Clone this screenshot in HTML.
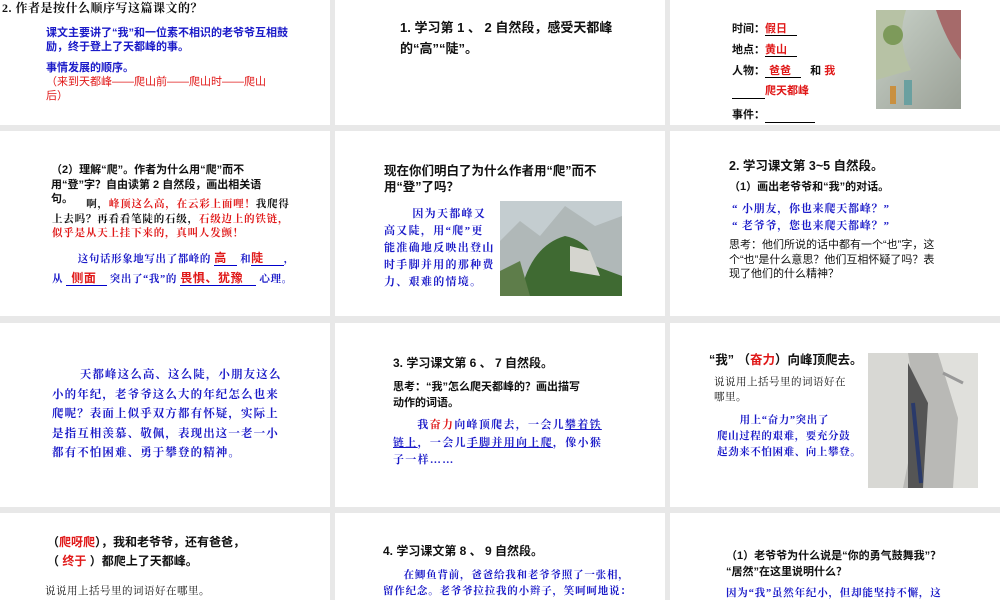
<!DOCTYPE html><html><head><meta charset="utf-8"><style>
body{margin:0;width:1000px;height:600px;background:#e8e8e8;position:relative;overflow:hidden;font-family:"Liberation Sans","Noto Sans CJK SC",sans-serif;font-size:11px;color:#111}
.s{position:absolute;background:#fff;overflow:hidden}
.a{position:absolute;white-space:nowrap;line-height:1.3}
.b{color:#1a1ac8;font-weight:bold}.r{color:#e01818}.bl{color:#1a1ac8}
.k{font-family:"Liberation Serif","Noto Serif CJK SC",serif}
u{text-decoration:underline}
.img{position:absolute}
</style></head><body>
<div class="s" style="left:0;top:0;width:330px;height:125px">
<div class="a k" style="left:2px;top:1px;font-weight:bold;font-size:12px;letter-spacing:0.5px">2. 作者是按什么顺序写这篇课文的？</div>
<div class="a b" style="left:46px;top:26px;line-height:14px;font-size:11px">课文主要讲了“我”和一位素不相识的老爷爷互相鼓<br>励，终于登上了天都峰的事。</div>
<div class="a b" style="left:46px;top:61px">事情发展的顺序。</div>
<div class="a r" style="left:46px;top:75px;line-height:14px">（来到天都峰——爬山前——爬山时——爬山<br>后）</div>
</div>
<div class="s" style="left:335px;top:0;width:330px;height:125px">
<div class="a" style="left:65px;top:17px;font-weight:bold;font-size:13px;line-height:21px">1. 学习第 1 、 2 自然段，感受天都峰<br>的“高”“陡”。</div>
</div>
<div class="s" style="left:670px;top:0;width:330px;height:125px">
<div class="a" style="left:62px;top:22px;font-size:11px;font-weight:bold">时间：<span class="r" style="border-bottom:1px solid #000;padding-right:10px">假日</span></div>
<div class="a" style="left:62px;top:43px;font-weight:bold">地点：<span class="r" style="border-bottom:1px solid #000;padding-right:10px">黄山</span></div>
<div class="a" style="left:62px;top:64px;font-weight:bold">人物：<span class="r" style="border-bottom:1px solid #000;padding:0 10px 0 4px">爸爸</span>&nbsp;&nbsp; 和 <span class="r">我</span></div>
<div class="a" style="left:62px;top:84px;font-weight:bold"><span style="border-bottom:1px solid #000;display:inline-block;width:33px">&nbsp;</span><span class="r">爬天都峰</span></div>
<div class="a" style="left:62px;top:108px;font-weight:bold">事件：<span style="border-bottom:1px solid #000;display:inline-block;width:50px">&nbsp;</span></div>
<svg class="img" style="left:206px;top:10px" width="85" height="99"><defs><linearGradient id="g1" x1="0" y1="0" x2="1" y2="1"><stop offset="0" stop-color="#c9d2c9"/><stop offset="1" stop-color="#9aa096"/></linearGradient></defs><rect width="85" height="99" fill="url(#g1)"/><path d="M0 0h30q-10 30 5 60l-35 10z" fill="#b7c2a5"/><path d="M60 0h25v50q-15-20-25-50z" fill="#a66a6a"/><circle cx="17" cy="25" r="10" fill="#7d9a5a"/><rect x="28" y="70" width="8" height="25" fill="#6aa0a0"/><rect x="14" y="76" width="6" height="18" fill="#c99040"/></svg>
</div>

<div class="s" style="left:0;top:131px;width:330px;height:185px">
<div class="a" style="left:51px;top:32px;font-weight:bold;line-height:14.5px">（2）理解“爬”。作者为什么用“爬”而不<br>用“登”字？自由读第 2 自然段，画出相关语<br>句。</div>
<div class="a k" style="left:52px;top:67px;font-weight:bold;line-height:14.5px;font-size:10.5px;letter-spacing:0.8px">&nbsp;&nbsp;&nbsp;&nbsp;&nbsp;&nbsp;&nbsp;&nbsp;&nbsp;&nbsp;啊，<span class="r">峰顶这么高，在云彩上面哩！</span>我爬得<br>上去吗？再看看笔陡的石级，<span class="r">石级边上的铁链，</span><br><span class="r">似乎是从天上挂下来的，真叫人发颤！</span></div>
<div class="a k b" style="left:52px;top:118px;line-height:19px;font-size:10.5px;letter-spacing:0.6px">&nbsp;&nbsp;&nbsp;&nbsp;&nbsp;&nbsp;&nbsp;&nbsp;这句话形象地写出了都峰的 <span class="r" style="border-bottom:1px solid #00c;padding-right:10px;font-family:'Liberation Sans','Noto Sans CJK SC';font-size:12px">高</span> 和<span class="r" style="border-bottom:1px solid #00c;padding-right:20px;font-family:'Liberation Sans','Noto Sans CJK SC';font-size:12px">陡</span>，<br>从 <span class="r" style="border-bottom:1px solid #00c;padding:0 10px 0 5px;font-family:'Liberation Sans','Noto Sans CJK SC';font-size:12px">侧面</span> 突出了“我”的 <span class="r" style="border-bottom:1px solid #00c;padding-right:13px;font-family:'Liberation Sans','Noto Sans CJK SC';font-size:12px">畏惧、犹豫</span> 心理。</div>
</div>
<div class="s" style="left:335px;top:131px;width:330px;height:185px">
<div class="a" style="left:49px;top:32px;font-weight:bold;font-size:12.5px;line-height:16px">现在你们明白了为什么作者用“爬”而不<br>用“登”了吗？</div>
<div class="a k b" style="left:49px;top:75px;line-height:17px;font-size:11px;letter-spacing:1.3px">&nbsp;&nbsp;&nbsp;&nbsp;&nbsp;&nbsp;&nbsp;因为天都峰又<br>高又陡，用“爬”更<br>能准确地反映出登山<br>时手脚并用的那种费<br>力、艰难的情境。</div>
<svg class="img" style="left:165px;top:70px" width="122" height="95"><rect width="122" height="95" fill="#c4cdd0"/><path d="M0 40l20-20 20 15 25-30 30 20 27-10v80H0z" fill="#b0b8b8"/><path d="M20 95q10-50 45-60 25 5 30 30l27 10v20z" fill="#3f6a32"/><path d="M0 70l20-10 10 35H0z" fill="#5e7d4a"/><path d="M70 45l20 5 10 25-30-5z" fill="#d5d5cf"/></svg>
</div>
<div class="s" style="left:670px;top:131px;width:330px;height:185px">
<div class="a" style="left:59px;top:27px;font-weight:bold;font-size:12.5px">2. 学习课文第 3~5 自然段。</div>
<div class="a" style="left:59px;top:49px;font-weight:bold">（1）画出老爷爷和“我”的对话。</div>
<div class="a k b" style="left:62px;top:70px;line-height:17px;letter-spacing:0.8px">“ 小朋友，你也来爬天都峰？”<br>“ 老爷爷，您也来爬天都峰？”</div>
<div class="a" style="left:59px;top:107px;line-height:14.5px">思考：他们所说的话中都有一个“也”字，这<br>个“也”是什么意思？他们互相怀疑了吗？表<br>现了他们的什么精神？</div>
</div>

<div class="s" style="left:0;top:323px;width:330px;height:184px">
<div class="a k b" style="left:52px;top:43px;line-height:19.5px;font-size:11.5px;letter-spacing:1.1px">&nbsp;&nbsp;&nbsp;&nbsp;&nbsp;&nbsp;&nbsp;天都峰这么高、这么陡，小朋友这么<br>小的年纪，老爷爷这么大的年纪怎么也来<br>爬呢？表面上似乎双方都有怀疑，实际上<br>是指互相羡慕、敬佩，表现出这一老一小<br>都有不怕困难、勇于攀登的精神。</div>
</div>
<div class="s" style="left:335px;top:323px;width:330px;height:184px">
<div class="a" style="left:58px;top:33px;font-weight:bold;font-size:12px">3. 学习课文第 6 、 7 自然段。</div>
<div class="a" style="left:58px;top:56px;font-weight:bold;line-height:16px">思考：“我”怎么爬天都峰的？画出描写<br>动作的词语。</div>
<div class="a k b" style="left:58px;top:94px;line-height:17.5px;letter-spacing:1.3px">&nbsp;&nbsp;&nbsp;&nbsp;&nbsp;&nbsp;我<span class="r">奋力</span>向峰顶爬去，一会儿<u>攀着铁</u><br><u>链上</u>，一会儿<u>手脚并用向上爬</u>，像小猴<br>子一样……</div>
</div>
<div class="s" style="left:670px;top:323px;width:330px;height:184px">
<div class="a" style="left:39px;top:29px;font-weight:bold;font-size:12.5px">“我” （<span class="r">奋力</span>）向峰顶爬去。</div>
<div class="a k" style="left:44px;top:53px;line-height:14.5px;font-size:10.5px;letter-spacing:0.5px">说说用上括号里的词语好在<br>哪里。</div>
<div class="a k b" style="left:47px;top:90px;line-height:16px;font-size:10.5px;letter-spacing:0.6px">&nbsp;&nbsp;&nbsp;&nbsp;&nbsp;&nbsp;&nbsp;用上“奋力”突出了<br>爬山过程的艰难，要充分鼓<br>起劲来不怕困难、向上攀登。</div>
<svg class="img" style="left:198px;top:30px" width="110" height="135"><rect width="110" height="135" fill="#b9b9b6"/><path d="M0 0h40l10 60-15 75H0z" fill="#d8d8d4"/><path d="M40 10l20 40-5 85H40z" fill="#555"/><path d="M70 0h40v135H85l5-70z" fill="#e0e0dc"/><path d="M45 50l8 80" stroke="#2a3a6a" stroke-width="4"/><path d="M75 20l20 10" stroke="#999" stroke-width="3"/></svg>
</div>

<div class="s" style="left:0;top:513px;width:330px;height:87px">
<div class="a" style="left:47px;top:20px;font-weight:bold;font-size:12px;line-height:19px">（<span class="r">爬呀爬</span>），我和老爷爷，还有爸爸，<br>（ <span class="r">终于</span> ）都爬上了天都峰。</div>
<div class="a k" style="left:45px;top:72px;font-size:10.5px;letter-spacing:0.5px">说说用上括号里的词语好在哪里。</div>
</div>
<div class="s" style="left:335px;top:513px;width:330px;height:87px">
<div class="a" style="left:48px;top:31px;font-weight:bold;font-size:12px">4. 学习课文第 8 、 9 自然段。</div>
<div class="a k b" style="left:48px;top:55px;line-height:16px;font-size:10.5px;letter-spacing:0.8px">&nbsp;&nbsp;&nbsp;&nbsp;&nbsp;&nbsp;在鲫鱼背前，爸爸给我和老爷爷照了一张相，<br>留作纪念。老爷爷拉拉我的小辫子，笑呵呵地说：</div>
</div>
<div class="s" style="left:670px;top:513px;width:330px;height:87px">
<div class="a" style="left:56px;top:35px;font-weight:bold;line-height:16px">（1）老爷爷为什么说是“你的勇气鼓舞我”？<br>“居然”在这里说明什么？</div>
<div class="a k b" style="left:56px;top:74px;font-size:10.5px;letter-spacing:0.8px">因为“我”虽然年纪小，但却能坚持不懈，这</div>
</div>
</body></html>
